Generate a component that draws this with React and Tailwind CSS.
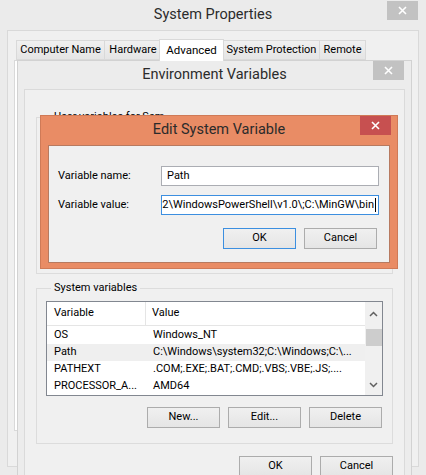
import React from "react";

const FONT = "font-['Roboto','Liberation_Sans',sans-serif]";

function CloseBtn({ className }) {
  return (
    <div className={`absolute top-0 flex h-[19px] w-[31px] items-center justify-center ${className}`}>
      <svg width="9" height="9" viewBox="0 0 9 9">
        <path d="M1 1L8 8M8 1L1 8" stroke="white" strokeWidth="1.6" />
      </svg>
    </div>
  );
}

function Btn({ children, def, w = "w-[73px]" }) {
  return (
    <div
      className={`flex h-[21px] ${w} items-center justify-center border bg-linear-to-b from-[#f0f0f0] to-[#e5e5e5] text-[11px] ${
        def ? "border-[#3c8fe0]" : "border-[#acacac]"
      }`}
    >
      {children}
    </div>
  );
}

function Tab({ children, w, active }) {
  if (active) {
    return (
      <div
        className={`relative z-10 -mb-px -ml-[2px] -mr-[1px] flex h-[22px] ${w} items-start justify-center border border-b-0 border-[#d9d9d9] bg-white pt-[2px] text-[11.5px]`}
      >
        {children}
      </div>
    );
  }
  return (
    <div
      className={`-mr-px flex h-[20px] ${w} items-center justify-center border border-[#d9d9d9] bg-linear-to-b from-[#f0f0f0] to-[#e5e5e5] text-[11px]`}
    >
      {children}
    </div>
  );
}

const rows = [
  ["OS", "Windows_NT"],
  ["Path", "C:\\Windows\\system32;C:\\Windows;C:\\..."],
  ["PATHEXT", ".COM;.EXE;.BAT;.CMD;.VBS;.VBE;.JS;...."],
  ["PROCESSOR_A...", "AMD64"],
];

function Chevron({ up }) {
  return (
    <svg width="9" height="6" viewBox="0 0 9 6">
      <path
        d={up ? "M1 5L4.5 1.5L8 5" : "M1 1L4.5 4.5L8 1"}
        fill="none"
        stroke="#606060"
        strokeWidth="1.5"
      />
    </svg>
  );
}

export default function App() {
  // the field is scrolled to its end, only the tail shows
  const pathValue = "32\\WindowsPowerShell\\v1.0\\;C:\\MinGW\\bin";

  return (
    <div className={`relative h-[475px] w-[426px] overflow-hidden bg-[#ebebeb] text-[11px] text-black ${FONT}`}>
      {/* System Properties */}
      <div className="flex h-[30px] items-center justify-center pb-[1px] text-[14.5px] text-[#2b2b2b]">
        System Properties
      </div>
      <CloseBtn className="right-[8px] top-[1px] bg-[#c2c2c2]" />
      <div className="mx-[7px] h-[437px] border border-[#d9d9d9] bg-[#f0f0f0] pt-[8px]">
        <div className="ml-[8px] flex items-end">
          <Tab w="w-[89px]">Computer Name</Tab>
          <Tab w="w-[58px]">Hardware</Tab>
          <Tab w="w-[65px]" active>Advanced</Tab>
          <Tab w="w-[97px]">System Protection</Tab>
          <Tab w="w-[47px]">Remote</Tab>
        </div>
        <div className="ml-[6px] h-[371px] w-[397px] border border-[#d9d9d9] bg-white" />
      </div>

      {/* Environment Variables */}
      <div className="absolute left-[17px] top-[60px] h-[430px] w-[395px] border border-[#d2d2d2] bg-[#ececec]">
        <div className="flex h-[28px] items-center justify-center pb-[1px] text-[14.5px] text-[#2b2b2b]">
          Environment Variables
        </div>
        <CloseBtn className="right-[7px] bg-[#c2c2c2]" />
        <div className="mx-[6px] h-[400px] border border-[#dadada] bg-[#f0f0f0] px-[11px] pt-[19px]">
          <fieldset className="h-[165px] border border-[#dcdcdc] px-[9px]">
            <legend className="ml-[5px] px-[3px] leading-[16px]">User variables for Sam</legend>
          </fieldset>

          <fieldset className="mt-[6px] h-[164px] border border-[#dcdcdc] px-[9px]">
            <legend className="ml-[5px] px-[3px] leading-[16px]">System variables</legend>
            <div className="mt-[5px] flex h-[95px] border border-[#828790] bg-white">
              <div className="flex-1 overflow-hidden">
                <div className="flex h-[24px] border-b border-[#e5e5e5]">
                  <div className="flex w-[99px] items-center border-r border-[#e5e5e5] pl-[7px]">Variable</div>
                  <div className="flex flex-1 items-center pl-[6px]">Value</div>
                </div>
                <div className="pt-[1px]">
                  {rows.map(([k, v]) => (
                    <div
                      key={k}
                      className={`flex h-[17px] items-center whitespace-nowrap ${k === "Path" ? "bg-[#efefef]" : ""}`}
                    >
                      <div className="w-[99px] pl-[7px]">{k}</div>
                      <div className="pl-[7px]">{v}</div>
                    </div>
                  ))}
                </div>
              </div>
              <div className="flex w-[17px] flex-col items-center bg-[#f0f0f0]">
                <div className="flex h-[24px] items-center justify-center">
                  <Chevron up />
                </div>
                <div className="mt-[3px] h-[17px] w-[16px] bg-[#cdcdcd]" />
                <div className="flex-1" />
                <div className="flex h-[20px] items-center justify-center">
                  <Chevron />
                </div>
              </div>
            </div>
            <div className="mt-[11px] flex justify-end gap-[8px] pr-[1px]">
              <Btn>New...</Btn>
              <Btn>Edit...</Btn>
              <Btn>Delete</Btn>
            </div>
          </fieldset>

          <div className="mt-[12px] flex justify-end gap-[8px]">
            <Btn>OK</Btn>
            <Btn>Cancel</Btn>
          </div>
        </div>
      </div>

      {/* Edit System Variable */}
      <div className="absolute left-[40px] top-[115px] h-[154px] w-[358px] border border-[#cf7a57] bg-[#e98c65]">
        <div className="flex h-[29px] items-center justify-center pb-[1px] text-[14.5px] text-[#2b2b2b]">
          Edit System Variable
        </div>
        <CloseBtn className="right-[6px] bg-[#c75050]" />
        <div className="mx-[7px] h-[118px] border border-[#b77a60] bg-[#f0f0f0] pl-[9px] pr-[10px] pt-[20px]">
          <div className="flex h-[20px] items-center">
            <div className="w-[103px]">Variable name:</div>
            <div className="flex h-[20px] w-[218px] items-center border border-[#abadb3] bg-white pl-[5px]">Path</div>
          </div>
          <div className="mt-[9px] flex h-[20px] items-center">
            <div className="w-[103px]">Variable value:</div>
            <div className="flex h-[20px] w-[218px] items-center justify-end overflow-hidden whitespace-nowrap border border-[#3c8fe0] bg-white pr-[2px]">
              <span>{pathValue}</span>
              <span className="ml-px h-[14px] w-px shrink-0 bg-black" />
            </div>
          </div>
          <div className="mt-[13px] flex justify-end gap-[8px] pr-[2px]">
            <Btn def>OK</Btn>
            <Btn>Cancel</Btn>
          </div>
        </div>
      </div>
    </div>
  );
}
